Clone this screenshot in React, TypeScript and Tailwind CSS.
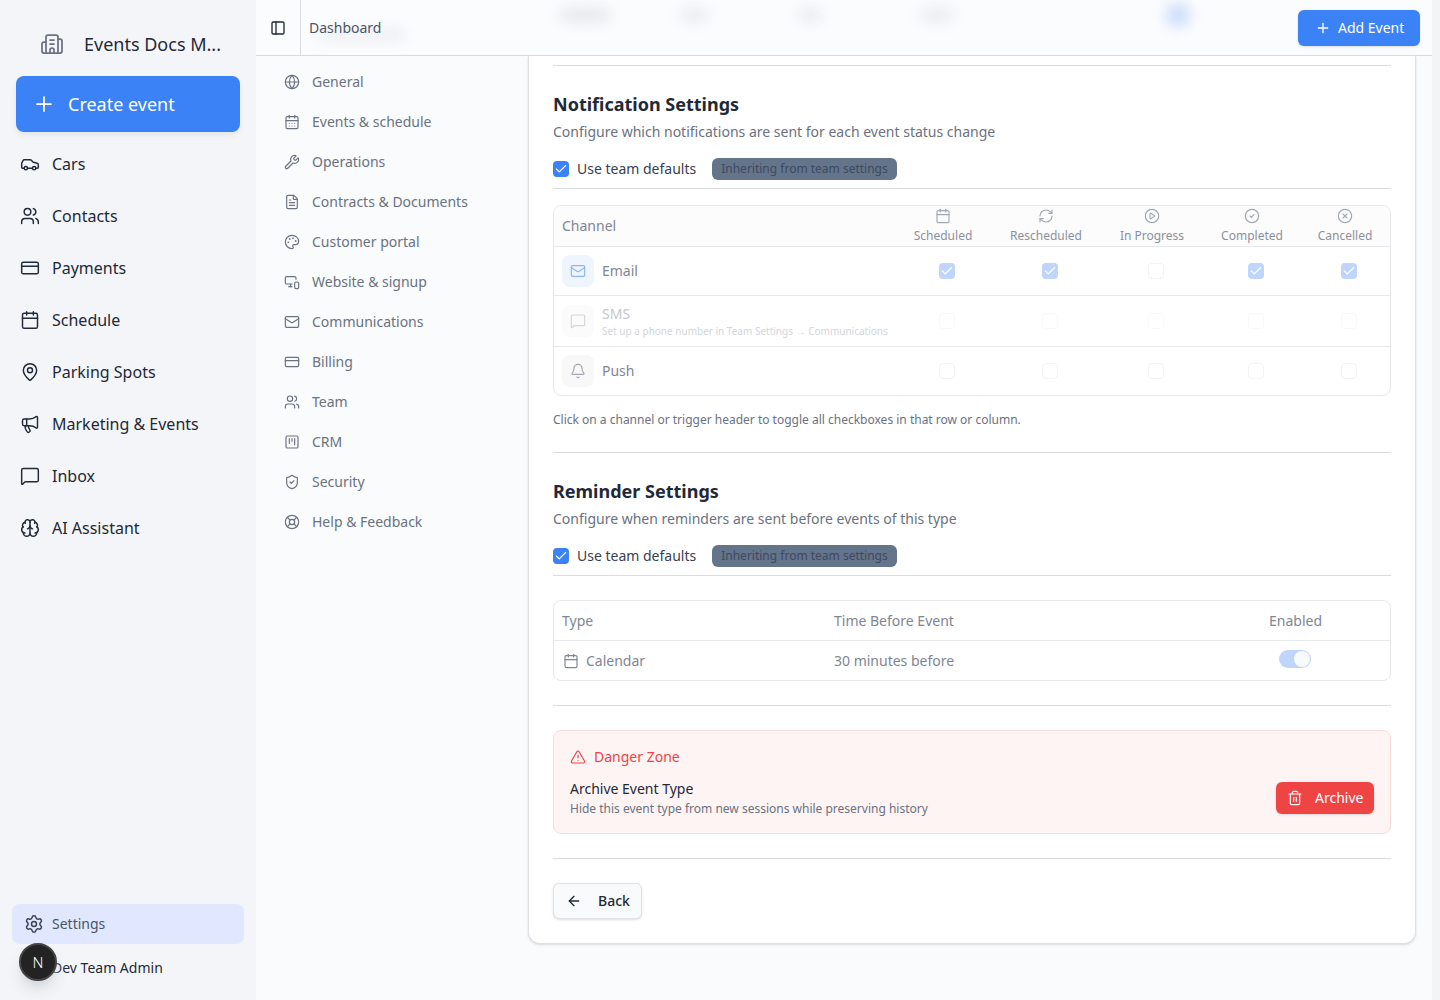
import {
  ArrowLeft,
  Bell,
  Brain,
  Building2,
  Calendar,
  CalendarDays,
  Car,
  Check,
  CircleCheck,
  CirclePlay,
  CircleX,
  CreditCard,
  FileText,
  Globe,
  LifeBuoy,
  Mail,
  MapPin,
  Megaphone,
  MessageSquare,
  MonitorSmartphone,
  PanelLeft,
  Palette,
  Plus,
  RefreshCw,
  Settings,
  ShieldCheck,
  SquareKanban,
  Trash2,
  TriangleAlert,
  Users,
  Wrench,
} from "lucide-react";

const mainNav = [
  { label: "Cars", icon: Car },
  { label: "Contacts", icon: Users },
  { label: "Payments", icon: CreditCard },
  { label: "Schedule", icon: Calendar },
  { label: "Parking Spots", icon: MapPin },
  { label: "Marketing & Events", icon: Megaphone },
  { label: "Inbox", icon: MessageSquare },
  { label: "AI Assistant", icon: Brain },
];

const settingsNav = [
  { label: "General", icon: Globe },
  { label: "Events & schedule", icon: CalendarDays },
  { label: "Operations", icon: Wrench },
  { label: "Contracts & Documents", icon: FileText },
  { label: "Customer portal", icon: Palette },
  { label: "Website & signup", icon: MonitorSmartphone },
  { label: "Communications", icon: Mail },
  { label: "Billing", icon: CreditCard },
  { label: "Team", icon: Users },
  { label: "CRM", icon: SquareKanban },
  { label: "Security", icon: ShieldCheck },
  { label: "Help & Feedback", icon: LifeBuoy },
];

const triggers = [
  { label: "Scheduled", icon: Calendar, width: "w-[90px]" },
  { label: "Rescheduled", icon: RefreshCw, width: "w-[116px]" },
  { label: "In Progress", icon: CirclePlay, width: "w-[96px]" },
  { label: "Completed", icon: CircleCheck, width: "w-[104px]" },
  { label: "Cancelled", icon: CircleX, width: "w-[82px]" },
];

function Divider() {
  return <div className="h-px bg-[#d9dbdf]" />;
}

function CellCheck({ checked, width, faint }: { checked: boolean; width: string; faint?: boolean }) {
  return (
    <div className={`${width} flex items-center justify-center`}>
      {checked ? (
        <span className="size-4 rounded bg-[#bfd5fb] flex items-center justify-center">
          <Check className="size-3.5 text-white" strokeWidth={2} />
        </span>
      ) : (
        <span className={`size-4 rounded border bg-white ${faint ? "border-[#f8f8f9]" : "border-[#f3f4f6]"}`} />
      )}
    </div>
  );
}

function TeamDefaults() {
  return (
    <div className="mt-4 flex items-center h-[22px]">
      <span className="size-4 rounded bg-[#3b82f6] flex items-center justify-center">
        <Check className="size-3.5 text-white" strokeWidth={2} />
      </span>
      <span className="ml-2 text-sm text-[#374151]">Use team defaults</span>
      <span className="ml-4 h-[22px] px-[9px] rounded-md bg-[#64748b] text-xs leading-[22px] text-[#3d4a60]">
        Inheriting from team settings
      </span>
    </div>
  );
}

export default function App() {
  return (
    <div className="flex h-[1000px] overflow-hidden bg-[#f9fbfd] font-['Noto_Sans',sans-serif]">
      {/* Main sidebar */}
      <aside className="relative w-[256px] shrink-0 flex flex-col bg-[#f4f5f8] pt-6 pb-3">
        <div className="h-10 flex items-center pl-[40px]">
          <Building2 className="size-6 text-[#6b7280]" strokeWidth={1.75} />
          <span className="ml-5 text-lg text-[#1f2937]">Events Docs M...</span>
        </div>
        <button className="mt-3 ml-4 w-[224px] h-14 rounded-lg bg-[#3b82f6] flex items-center pl-[16px] text-lg text-white shadow-md shadow-gray-200">
          <Plus className="size-6" strokeWidth={1.75} />
          <span className="ml-3">Create event</span>
        </button>
        <nav className="mt-1.5 flex flex-col">
          {mainNav.map((item) => (
            <div key={item.label} className="h-[52px] flex items-center pl-5 text-base text-[#1f2937]">
              <item.icon className="size-5" strokeWidth={1.75} />
              <span className="ml-3">{item.label}</span>
            </div>
          ))}
        </nav>
        <div className="mt-auto ml-3 w-[232px] h-10 rounded-lg bg-[#e0e7ff] flex items-center pl-3 text-sm text-[#475569]">
          <Settings className="size-5 text-[#374151]" strokeWidth={1.75} />
          <span className="ml-2">Settings</span>
        </div>
        <div className="mt-1 h-10 flex items-center pl-[52px] text-sm text-[#1f2937]">Dev Team Admin</div>
        {/* dev indicator */}
        <div className="absolute left-[19px] top-[943px] size-[38px] rounded-full bg-[#232323] border-2 border-[#454545] flex items-center justify-center text-[15px] font-light text-white shadow-lg shadow-gray-300">
          N
        </div>
      </aside>

      <div className="flex-1 flex flex-col min-w-0">
        {/* Top bar */}
        <header className="relative h-14 shrink-0 flex items-center border-b border-[#d9dbdf] bg-[#fbfcfe] pr-3">
          <span className="absolute left-[304px] top-[8px] h-[14px] w-[50px] rounded-full bg-[#e6e7ea] blur-[7px]" />
          <span className="absolute left-[424px] top-[8px] h-[14px] w-[28px] rounded-full bg-[#eaebee] blur-[7px]" />
          <span className="absolute left-[542px] top-[8px] h-[14px] w-[24px] rounded-full bg-[#eaebee] blur-[7px]" />
          <span className="absolute left-[664px] top-[8px] h-[14px] w-[34px] rounded-full bg-[#eaebee] blur-[7px]" />
          <span className="absolute left-[910px] top-[3px] size-[24px] rounded-full bg-[#c9dcfa] blur-[7px]" />
          <span className="absolute left-[60px] top-[28px] h-[14px] w-[90px] rounded-full bg-[#f0f1f4] blur-[6px]" />
          <div className="relative w-[44px] h-full flex items-center justify-center border-r border-[#d9dbdf] box-content">
            <PanelLeft className="size-4 text-[#1f2937]" strokeWidth={2} />
          </div>
          <span className="relative ml-2 text-sm text-[#4b5563]">Dashboard</span>
          <button className="relative ml-auto h-9 w-[122px] rounded-md bg-[#3b82f6] flex items-center pl-[17px] text-sm text-white shadow-sm">
            <Plus className="size-4" strokeWidth={2} />
            <span className="ml-[7px]">Add Event</span>
          </button>
        </header>

        <div className="flex-1 flex min-h-0">
          {/* Settings nav */}
          <nav className="w-[272px] shrink-0 pt-1.5 flex flex-col">
            {settingsNav.map((item) => (
              <div key={item.label} className="h-10 flex items-center pl-7 text-sm text-[#6b7280]">
                <item.icon className="size-4" strokeWidth={1.75} />
                <span className="ml-3">{item.label}</span>
              </div>
            ))}
          </nav>

          {/* Card */}
          <main className="w-[888px] self-start bg-white border-x border-b border-[#dfe1e5] rounded-b-xl shadow-sm px-6 pt-[9px] pb-6">
            <Divider />
            <h2 className="mt-6 text-lg leading-7 font-bold text-[#1f2937]">Notification Settings</h2>
            <p className="mt-1 text-sm text-[#6b7280]">Configure which notifications are sent for each event status change</p>
            <TeamDefaults />
            <div className="mt-2">
              <Divider />
            </div>

            <div className="mt-4 h-[191px] rounded-lg border border-[#e8e9ec] overflow-hidden">
              <div className="h-[41px] flex border-b border-[#e8e9ec] bg-[#fcfcfc]">
                <div className="w-[348px] pl-2 flex items-center text-sm text-[#7f8694]">Channel</div>
                {triggers.map((t) => (
                  <div key={t.label} className={`${t.width} pr-2 flex flex-col items-center pt-[2px] text-[#8b919c]`}>
                    <t.icon className="size-4 text-[#a3a8b2]" strokeWidth={1.75} />
                    <span className="mt-1 text-xs leading-4 whitespace-nowrap">{t.label}</span>
                  </div>
                ))}
              </div>

              <div className="h-[49px] flex items-center border-b border-[#e8e9ec]">
                <div className="w-[348px] pl-2 flex items-center">
                  <span className="size-8 rounded-lg bg-[#eff5fe] flex items-center justify-center">
                    <Mail className="size-4 text-[#8fb4f2]" strokeWidth={1.75} />
                  </span>
                  <span className="ml-2 text-sm text-[#7f8694]">Email</span>
                </div>
                {[true, true, false, true, true].map((on, i) => (
                  <CellCheck key={i} checked={on} width={triggers[i].width} />
                ))}
              </div>

              <div className="h-[51px] flex items-center border-b border-[#e8e9ec]">
                <div className="w-[348px] pl-2 flex items-center">
                  <span className="size-8 rounded-lg bg-[#fbfbfc] flex items-center justify-center">
                    <MessageSquare className="size-4 text-[#d3d5da]" strokeWidth={1.75} />
                  </span>
                  <div className="ml-2 flex flex-col">
                    <span className="text-sm leading-5 text-[#c4c7cc]">SMS</span>
                    <span className="text-[10px] leading-[14px] whitespace-nowrap text-[#d3d5da]">
                      Set up a phone number in Team Settings → Communications
                    </span>
                  </div>
                </div>
                {triggers.map((t) => (
                  <CellCheck key={t.label} checked={false} faint width={t.width} />
                ))}
              </div>

              <div className="h-[48px] flex items-center">
                <div className="w-[348px] pl-2 flex items-center">
                  <span className="size-8 rounded-lg bg-[#f8f8f9] flex items-center justify-center">
                    <Bell className="size-4 text-[#a3a8b2]" strokeWidth={1.75} />
                  </span>
                  <span className="ml-2 text-sm text-[#7f8694]">Push</span>
                </div>
                {triggers.map((t) => (
                  <CellCheck key={t.label} checked={false} width={t.width} />
                ))}
              </div>
            </div>

            <p className="mt-4 text-xs leading-4 text-[#6b7280]">
              Click on a channel or trigger header to toggle all checkboxes in that row or column.
            </p>
            <div className="mt-6">
              <Divider />
            </div>

            <h2 className="mt-6 text-lg leading-7 font-bold text-[#1f2937]">Reminder Settings</h2>
            <p className="mt-1 text-sm text-[#6b7280]">Configure when reminders are sent before events of this type</p>
            <TeamDefaults />
            <div className="mt-2">
              <Divider />
            </div>

            <div className="mt-6 h-[81px] rounded-lg border border-[#e8e9ec] text-sm text-[#7f8694]">
              <div className="h-10 flex items-center border-b border-[#e8e9ec]">
                <div className="w-[280px] pl-2">Type</div>
                <div className="flex-1">Time Before Event</div>
                <div className="w-[121px]">Enabled</div>
              </div>
              <div className="h-[39px] flex items-center">
                <div className="w-[280px] pl-[9px] flex items-center">
                  <Calendar className="size-4" strokeWidth={1.75} />
                  <span className="ml-[7px]">Calendar</span>
                </div>
                <div className="flex-1">30 minutes before</div>
                <div className="w-[121px] pl-2.5">
                  <div className="w-8 h-[18px] rounded-full bg-[#bfd5fb] flex items-center justify-end pr-px -translate-y-[2px]">
                    <span className="size-4 rounded-full bg-[#f8fafc]" />
                  </div>
                </div>
              </div>
            </div>

            <div className="mt-6">
              <Divider />
            </div>

            <div className="mt-6 h-[104px] rounded-lg border border-[#fadcdc] bg-[#fef4f4] px-4 flex items-end justify-between pb-4">
              <div>
                <div className="flex items-center text-sm text-[#ef4444]">
                  <TriangleAlert className="size-4" strokeWidth={1.75} />
                  <span className="ml-2">Danger Zone</span>
                </div>
                <div className="mt-3 text-sm text-[#1f2937]">Archive Event Type</div>
                <div className="text-xs leading-4 mt-0.5 text-[#6b7280]">Hide this event type from new sessions while preserving history</div>
              </div>
              <button className="mb-[3px] h-8 w-[98px] rounded-md bg-[#ef4444] flex items-center pl-[11px] text-sm text-white shadow-sm">
                <Trash2 className="size-4" strokeWidth={1.75} />
                <span className="ml-3">Archive</span>
              </button>
            </div>

            <div className="mt-6">
              <Divider />
            </div>

            <button className="mt-6 h-9 w-[89px] rounded-md border border-[#dfe1e5] bg-[#f8fafc] flex items-center pl-3 text-sm font-medium text-[#1f2937] shadow-sm">
              <ArrowLeft className="size-4" strokeWidth={2} />
              <span className="ml-4">Back</span>
            </button>
          </main>
        </div>
      </div>

      {/* Scrollbar track */}
      <div className="w-2 shrink-0 bg-[#f3f4f6]" />
    </div>
  );
}
